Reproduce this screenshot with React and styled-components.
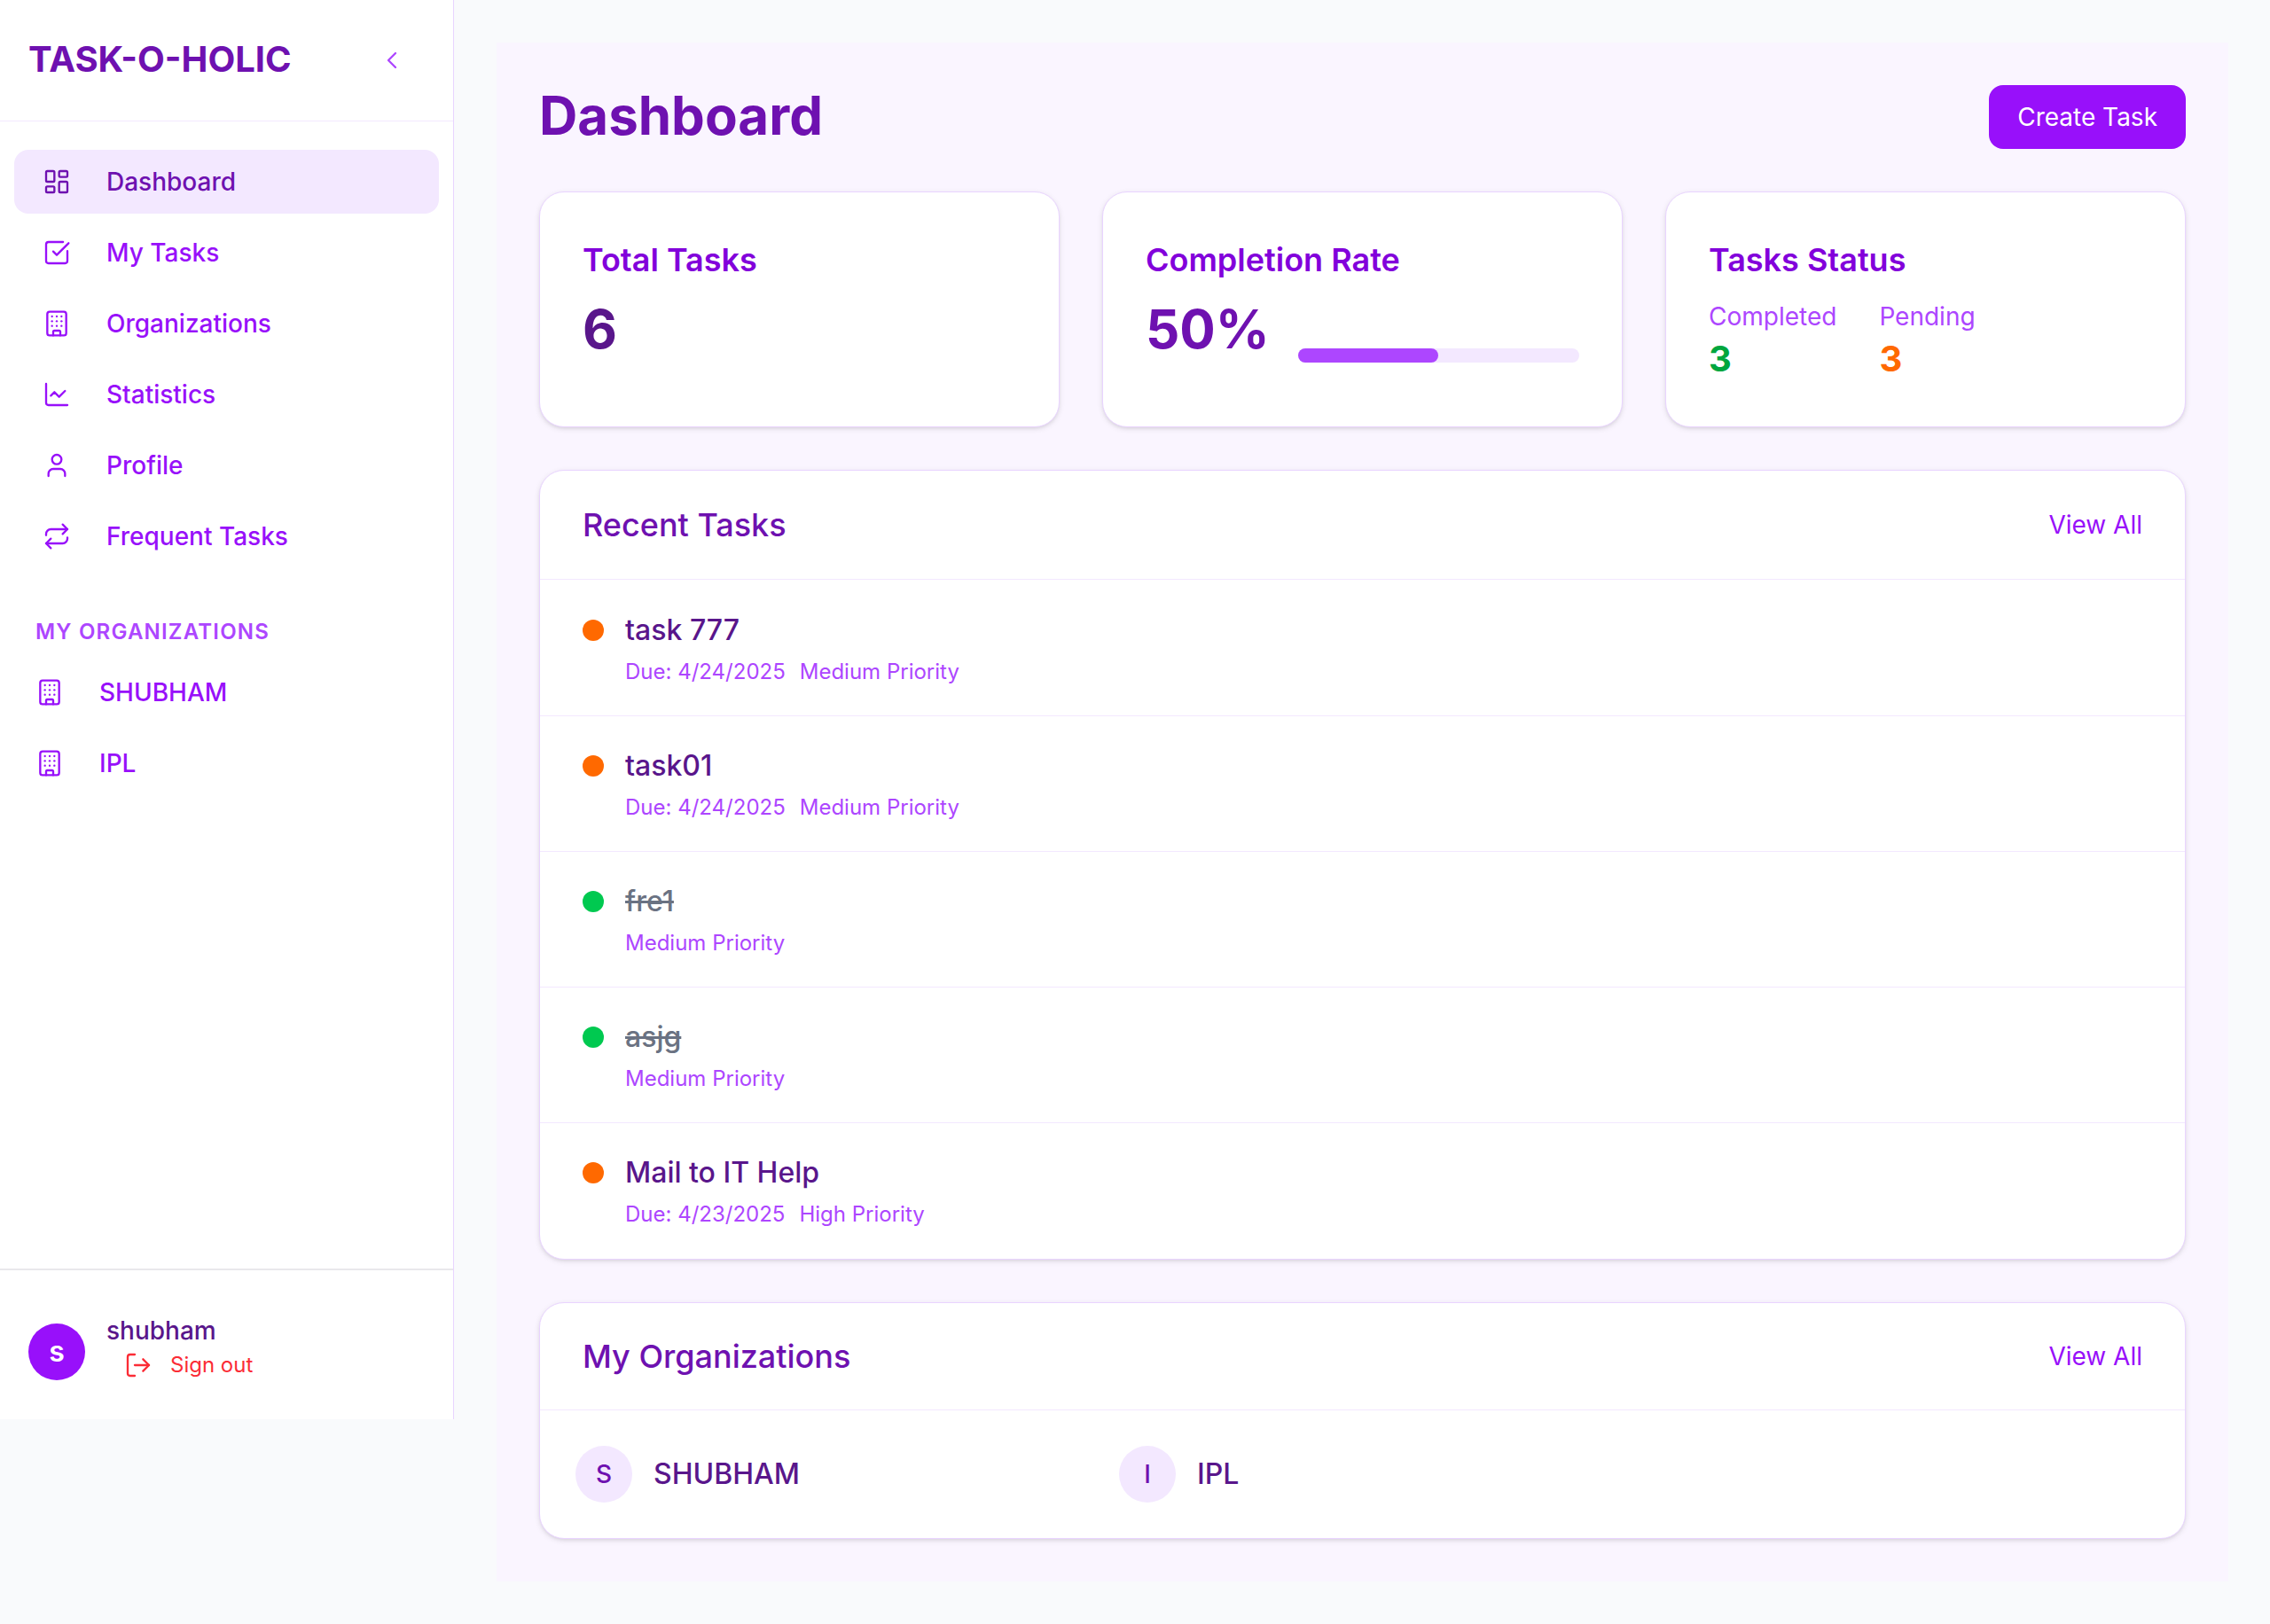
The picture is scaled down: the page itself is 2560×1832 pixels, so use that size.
import React from "react";
import styled, { createGlobalStyle } from "styled-components";
import {
  Building,
  ChartLine,
  ChevronLeft,
  LayoutDashboard,
  LogOut,
  Repeat,
  SquareCheckBig,
  User,
} from "lucide-react";

const c = {
  purple50: "#faf5ff",
  purple100: "#f3e8ff",
  purple200: "#e9d4ff",
  purple500: "#ad46ff",
  purple600: "#9810fa",
  purple700: "#8200db",
  purple800: "#6e11b0",
  purple900: "#59168b",
  page: "#f9fafc",
  line: "#e9e8eb",
  green500: "#00c950",
  green600: "#00a63e",
  orange: "#ff6900",
  red: "#fb2c36",
  gray: "#6a7282",
};

const GlobalStyle = createGlobalStyle`
  *, *::before, *::after { box-sizing: border-box; }
  body {
    margin: 0;
    background: ${c.page};
    font-family: Inter, "Liberation Sans", sans-serif;
    font-size: 28px;
    line-height: 40px;
  }
  h1, h2, h3, p, ul { margin: 0; padding: 0; }
  ul { list-style: none; }
  a { color: inherit; text-decoration: none; }
  button { font: inherit; color: inherit; border: 0; background: none; padding: 0; cursor: pointer; }
  svg { display: block; flex: none; }
`;

const Shell = styled.div`
  display: flex;
  align-items: flex-start;
  min-height: 100vh;
`;

const Sidebar = styled.aside`
  flex: none;
  width: 512px;
  height: 100vh;
  max-height: 1601px;
  display: flex;
  flex-direction: column;
  background: #fff;
  border-right: 1px solid ${c.purple200};
`;

const SidebarHeader = styled.div`
  display: flex;
  align-items: center;
  justify-content: space-between;
  padding: 32px;
  border-bottom: 1px solid ${c.purple100};
`;

const Brand = styled.div`
  font-size: 40px;
  line-height: 56px;
  padding-bottom: 2px;
  font-weight: 700;
  color: ${c.purple800};
`;

const CollapseButton = styled.button`
  display: grid;
  place-items: center;
  width: 74px;
  height: 72px;
  border-radius: 16px;
  color: ${c.purple500};
`;

const Nav = styled.nav`
  flex: 1;
  padding: 32px 16px;
`;

const NavList = styled.ul`
  display: flex;
  flex-direction: column;
  gap: 8px;
`;

const NavLink = styled.a`
  display: flex;
  align-items: center;
  gap: 40px;
  padding: 16px ${(p) => (p.$nested ? 24 : 32)}px;
  border-radius: 16px;
  font-weight: 500;
  color: ${(p) => (p.$active ? c.purple800 : c.purple600)};
  background: ${(p) => (p.$active ? c.purple100 : "transparent")};
`;

const NavHeading = styled.h3`
  margin: 56px 24px 16px;
  font-size: 24px;
  line-height: 32px;
  font-weight: 600;
  letter-spacing: 0.05em;
  text-transform: uppercase;
  color: ${c.purple500};
`;

const SidebarFooter = styled.div`
  display: flex;
  align-items: center;
  gap: 24px;
  padding: 48px 32px 32px;
  border-top: 2px solid ${c.line};
`;

const Avatar = styled.div`
  flex: none;
  display: grid;
  place-items: center;
  width: 64px;
  height: 64px;
  border-radius: 50%;
  font-size: 28px;
  font-weight: 500;
  color: ${c.purple800};
  background: ${c.purple100};
`;

const UserAvatar = styled(Avatar)`
  font-size: 32px;
  font-weight: 600;
  color: #fff;
  background: ${c.purple600};
`;

const UserInfo = styled.div`
  padding-bottom: 10px;
`;

const UserName = styled.div`
  font-weight: 500;
  color: ${c.purple900};
`;

const SignOut = styled.button`
  display: flex;
  align-items: center;
  gap: 20px;
  padding: 0 20px;
  font-size: 24px;
  line-height: 38px;
  color: ${c.red};
`;

const Main = styled.main`
  flex: 1;
  min-width: 0;
  padding: 48px 47px 48px 48px;
`;

const Panel = styled.div`
  display: flex;
  flex-direction: column;
  gap: 48px;
  padding: 48px;
  background: ${c.purple50};
`;

const PageHeader = styled.header`
  display: flex;
  align-items: center;
  justify-content: space-between;
`;

const PageTitle = styled.h1`
  padding-bottom: 4px;
  font-size: 60px;
  line-height: 68px;
  font-weight: 700;
  color: ${c.purple800};
`;

const PrimaryButton = styled.button`
  padding: 16px 32px;
  border-radius: 16px;
  color: #fff;
  background: ${c.purple600};
`;

const StatGrid = styled.div`
  display: grid;
  grid-template-columns: repeat(3, 1fr);
  gap: 48px;
`;

const Card = styled.section`
  background: #fff;
  border: 1px solid ${c.purple200};
  border-radius: 28px;
  box-shadow: 0 2px 6px rgba(0, 0, 0, 0.1), 0 2px 4px -2px rgba(0, 0, 0, 0.1);
`;

const StatCard = styled(Card)`
  padding: 48px;
`;

const StatTitle = styled.h2`
  margin-bottom: 16px;
  font-size: 36px;
  line-height: 56px;
  font-weight: 600;
  color: ${c.purple700};
`;

const BigNumber = styled.div`
  padding-bottom: 4px;
  font-size: 60px;
  line-height: 68px;
  font-weight: 700;
  color: ${(p) => p.$color};
`;

const RateRow = styled.div`
  display: flex;
  align-items: flex-end;
  gap: 32px;
`;

const Track = styled.div`
  flex: 1;
  height: 16px;
  border-radius: 8px;
  background: ${c.purple100};
`;

const Fill = styled.div`
  height: 100%;
  border-radius: 8px;
  background: ${c.purple500};
`;

const StatusRow = styled.div`
  display: flex;
  gap: 48px;
`;

const StatusLabel = styled.div`
  color: ${c.purple500};
`;

const StatusValue = styled.div`
  font-size: 40px;
  line-height: 56px;
  font-weight: 700;
  color: ${(p) => p.$color};
`;

const CardHeader = styled.div`
  display: flex;
  align-items: center;
  justify-content: space-between;
  padding: ${(p) => p.$pad}px 48px;
  border-bottom: 1px solid ${c.purple100};
`;

const CardTitle = styled.h2`
  font-size: 36px;
  line-height: 56px;
  font-weight: 500;
  color: ${c.purple800};
`;

const ViewAll = styled.a`
  color: ${c.purple600};
`;

const TaskList = styled.ul`
  padding: 1px 0;
`;

const TaskRow = styled.li`
  display: grid;
  grid-template-columns: 24px 1fr;
  column-gap: 24px;
  row-gap: 5px;
  align-items: center;
  padding: 32px 48px 31px;
  & + & {
    border-top: 1px solid ${c.purple100};
  }
`;

const Dot = styled.span`
  width: 24px;
  height: 24px;
  border-radius: 50%;
  background: ${(p) => (p.$done ? c.green500 : c.orange)};
`;

const TaskTitle = styled.h3`
  font-size: 32px;
  line-height: 48px;
  font-weight: 500;
  color: ${(p) => (p.$done ? c.gray : c.purple900)};
  text-decoration: ${(p) => (p.$done ? "line-through" : "none")};
`;

const TaskMeta = styled.div`
  grid-column: 2;
  display: flex;
  gap: 16px;
  font-size: 24px;
  line-height: 36px;
  color: ${c.purple500};
`;

const OrgGrid = styled.div`
  display: grid;
  grid-template-columns: repeat(3, 1fr);
  gap: 32px;
  padding: 24px;
`;

const OrgLink = styled.a`
  display: flex;
  align-items: center;
  gap: 24px;
  padding: 16px;
  font-size: 32px;
  font-weight: 500;
  color: ${c.purple900};
`;

const navItems = [
  { label: "Dashboard", icon: LayoutDashboard, active: true },
  { label: "My Tasks", icon: SquareCheckBig },
  { label: "Organizations", icon: Building },
  { label: "Statistics", icon: ChartLine },
  { label: "Profile", icon: User },
  { label: "Frequent Tasks", icon: Repeat },
];

const organizations = ["SHUBHAM", "IPL"];

const tasks = [
  { title: "task 777", due: "4/24/2025", priority: "Medium" },
  { title: "task01", due: "4/24/2025", priority: "Medium" },
  { title: "fre1", priority: "Medium", done: true },
  { title: "asjg", priority: "Medium", done: true },
  { title: "Mail to IT Help", due: "4/23/2025", priority: "High" },
];

const completed = 3;
const pending = 3;
const total = completed + pending;
const rate = Math.round((completed / total) * 100);

export default function App() {
  return (
    <>
      <GlobalStyle />
      <Shell>
        <Sidebar>
          <SidebarHeader>
            <Brand>TASK-O-HOLIC</Brand>
            <CollapseButton aria-label="Collapse sidebar">
              <ChevronLeft size={32} strokeWidth={1.75} />
            </CollapseButton>
          </SidebarHeader>
          <Nav>
            <NavList>
              {navItems.map(({ label, icon: Icon, active }) => (
                <li key={label}>
                  <NavLink href="#" $active={active}>
                    <Icon size={32} strokeWidth={1.75} />
                    {label}
                  </NavLink>
                </li>
              ))}
            </NavList>
            <NavHeading>My Organizations</NavHeading>
            <NavList>
              {organizations.map((name) => (
                <li key={name}>
                  <NavLink href="#" $nested>
                    <Building size={32} strokeWidth={1.75} />
                    {name}
                  </NavLink>
                </li>
              ))}
            </NavList>
          </Nav>
          <SidebarFooter>
            <UserAvatar>s</UserAvatar>
            <UserInfo>
              <UserName>shubham</UserName>
              <SignOut>
                <LogOut size={32} strokeWidth={1.75} />
                Sign out
              </SignOut>
            </UserInfo>
          </SidebarFooter>
        </Sidebar>

        <Main>
          <Panel>
            <PageHeader>
              <PageTitle>Dashboard</PageTitle>
              <PrimaryButton>Create Task</PrimaryButton>
            </PageHeader>

            <StatGrid>
              <StatCard>
                <StatTitle>Total Tasks</StatTitle>
                <BigNumber $color={c.purple900}>{total}</BigNumber>
              </StatCard>
              <StatCard>
                <StatTitle>Completion Rate</StatTitle>
                <RateRow>
                  <BigNumber $color={c.purple800}>{rate}%</BigNumber>
                  <Track>
                    <Fill style={{ width: `${rate}%` }} />
                  </Track>
                </RateRow>
              </StatCard>
              <StatCard>
                <StatTitle>Tasks Status</StatTitle>
                <StatusRow>
                  <div>
                    <StatusLabel>Completed</StatusLabel>
                    <StatusValue $color={c.green600}>{completed}</StatusValue>
                  </div>
                  <div>
                    <StatusLabel>Pending</StatusLabel>
                    <StatusValue $color={c.orange}>{pending}</StatusValue>
                  </div>
                </StatusRow>
              </StatCard>
            </StatGrid>

            <Card>
              <CardHeader $pad={33}>
                <CardTitle>Recent Tasks</CardTitle>
                <ViewAll href="#">View All</ViewAll>
              </CardHeader>
              <TaskList>
                {tasks.map((t) => (
                  <TaskRow key={t.title}>
                    <Dot $done={t.done} />
                    <TaskTitle $done={t.done}>{t.title}</TaskTitle>
                    <TaskMeta>
                      {t.due && <span>Due: {t.due}</span>}
                      <span>{t.priority} Priority</span>
                    </TaskMeta>
                  </TaskRow>
                ))}
              </TaskList>
            </Card>

            <Card>
              <CardHeader $pad={32}>
                <CardTitle>My Organizations</CardTitle>
                <ViewAll href="#">View All</ViewAll>
              </CardHeader>
              <OrgGrid>
                {organizations.map((name) => (
                  <OrgLink href="#" key={name}>
                    <Avatar>{name[0]}</Avatar>
                    {name}
                  </OrgLink>
                ))}
              </OrgGrid>
            </Card>
          </Panel>
        </Main>
      </Shell>
    </>
  );
}
